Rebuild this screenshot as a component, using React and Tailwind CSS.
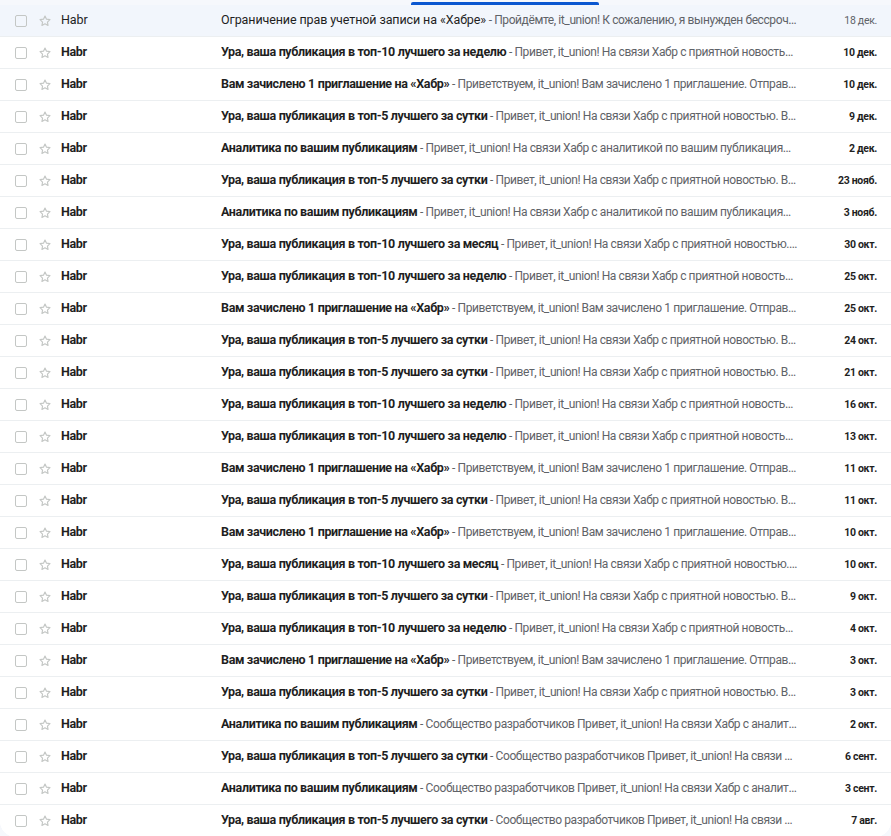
import React from "react";

const PRIV = "Привет, it_union! На связи Хабр с приятной новостью. Ваша публикация попала в подборку";
const ANAL = "Привет, it_union! На связи Хабр с аналитикой по вашим публикациям за прошедший период";
const INV = "Приветствуем, it_union! Вам зачислено 1 приглашение. Отправьте его тому, кого считаете достойным";
const SOOB = "Сообщество разработчиков Привет, it_union! На связи Хабр с аналитикой по вашим публикациям";
const SOOB2 = "Сообщество разработчиков Привет, it_union! На связи Хабр с приятной новостью";

const W10 = "Ура, ваша публикация в топ-10 лучшего за неделю";
const D5 = "Ура, ваша публикация в топ-5 лучшего за сутки";
const M10 = "Ура, ваша публикация в топ-10 лучшего за месяц";
const INVS = "Вам зачислено 1 приглашение на «Хабр»";
const ANS = "Аналитика по вашим публикациям";

const письма = [
  { тема: "Ограничение прав учетной записи на «Хабре»", текст: "Пройдёмте, it_union! К сожалению, я вынужден бессрочно ограничить права вашей учетной записи", дата: "18 дек.", прочитано: true },
  { тема: W10, текст: PRIV, дата: "10 дек." },
  { тема: INVS, текст: INV, дата: "10 дек." },
  { тема: D5, текст: PRIV, дата: "9 дек." },
  { тема: ANS, текст: ANAL, дата: "2 дек." },
  { тема: D5, текст: PRIV, дата: "23 нояб." },
  { тема: ANS, текст: ANAL, дата: "3 нояб." },
  { тема: M10, текст: PRIV, дата: "30 окт." },
  { тема: W10, текст: PRIV, дата: "25 окт." },
  { тема: INVS, текст: INV, дата: "25 окт." },
  { тема: D5, текст: PRIV, дата: "24 окт." },
  { тема: D5, текст: PRIV, дата: "21 окт." },
  { тема: W10, текст: PRIV, дата: "16 окт." },
  { тема: W10, текст: PRIV, дата: "13 окт." },
  { тема: INVS, текст: INV, дата: "11 окт." },
  { тема: D5, текст: PRIV, дата: "11 окт." },
  { тема: INVS, текст: INV, дата: "10 окт." },
  { тема: M10, текст: PRIV, дата: "10 окт." },
  { тема: D5, текст: PRIV, дата: "9 окт." },
  { тема: W10, текст: PRIV, дата: "4 окт." },
  { тема: INVS, текст: INV, дата: "3 окт." },
  { тема: D5, текст: PRIV, дата: "3 окт." },
  { тема: ANS, текст: SOOB, дата: "2 окт." },
  { тема: D5, текст: SOOB2, дата: "6 сент." },
  { тема: ANS, текст: SOOB, дата: "3 сент." },
  { тема: D5, текст: SOOB2, дата: "7 авг." },
];

function Звезда() {
  return (
    <svg width="14" height="14" viewBox="0 0 24 24" fill="none" stroke="#c4c7c5" strokeWidth="2" strokeLinejoin="round">
      <path d="M12 3.5l2.6 5.4 5.9.8-4.3 4.1 1 5.8L12 16.8l-5.2 2.8 1-5.8-4.3-4.1 5.9-.8z" />
    </svg>
  );
}

function Строка({ письмо }) {
  const жирно = !письмо.прочитано;
  return (
    <div
      className={
        "flex h-8 shrink-0 items-center border-b border-[#eceff1] text-[12.5px] " +
        (письмо.прочитано ? "bg-[#f2f6fc]" : "bg-white")
      }
    >
      <div className="flex w-[61px] shrink-0 items-center pl-[15px]">
        <span className="h-[12px] w-[12px] rounded-[2px] border-[1.5px] border-[#c4c7c5]" />
        <span className="ml-[11px] flex">
          <Звезда />
        </span>
      </div>
      <div
        className={
          "w-[160px] shrink-0 truncate text-[#1f1f1f] " +
          (жирно ? "font-bold tracking-[-0.35px]" : "tracking-[-0.1px]")
        }
      >
        Habr
      </div>
      <div className="min-w-0 flex-1 truncate pr-[12px] text-[#5f6368] tracking-[-0.1px]">
        <span className={"text-[#1f1f1f] " + (жирно ? "font-bold tracking-[-0.35px]" : "")}>{письмо.тема}</span>
        <span className="text-[12px] tracking-[-0.4px]"> - {письмо.текст}</span>
      </div>
      <div
        className={
          "w-[80px] shrink-0 pr-[14px] text-right text-[10.5px] tracking-[-0.3px] " +
          (жирно ? "font-bold text-[#1f1f1f]" : "text-[#5f6368]")
        }
      >
        {письмо.дата}
      </div>
    </div>
  );
}

export default function App() {
  return (
    <div className="h-[836px] overflow-hidden bg-[#f6f8fc] font-['Roboto',sans-serif]">
      <div className="relative h-[5px]">
        <div className="absolute left-[411px] top-[2px] h-[3px] w-[188px] rounded-t-[2px] bg-[#0b57d0]" />
      </div>
      <div className="flex flex-col overflow-hidden rounded-b-[16px] bg-white">
        {письма.map((п, i) => (
          <Строка key={i} письмо={п} />
        ))}
      </div>
    </div>
  );
}
